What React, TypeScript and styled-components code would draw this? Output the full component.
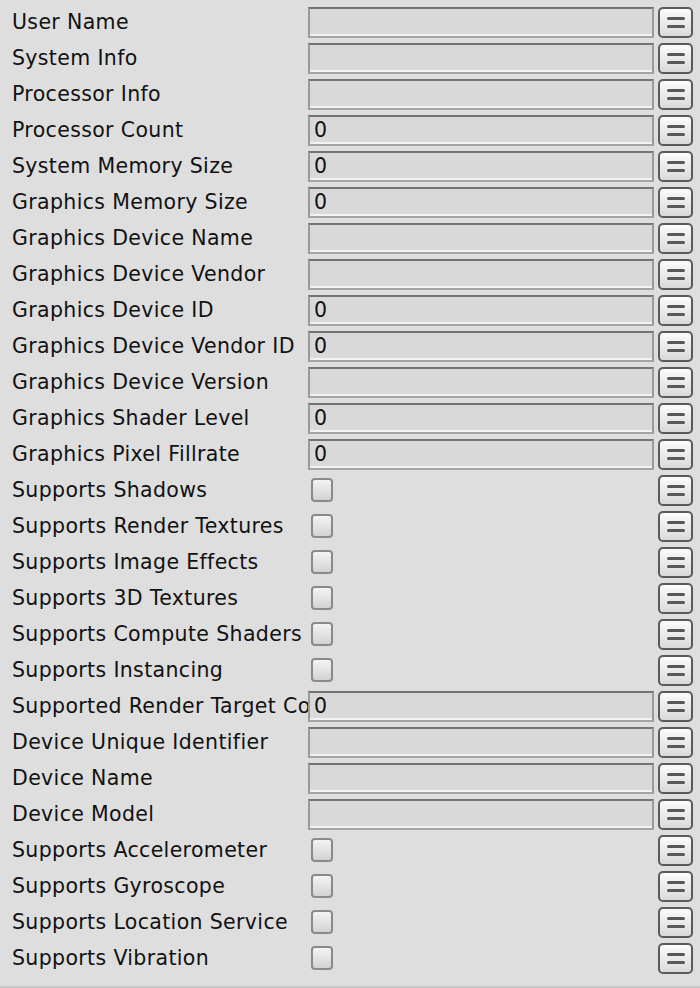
import styled, { createGlobalStyle } from "styled-components";

const GlobalStyle = createGlobalStyle`
  html, body {
    margin: 0;
    padding: 0;
    background: #dedede;
  }
`;

const Panel = styled.div`
  box-sizing: border-box;
  width: 700px;
  height: 988px;
  padding-top: 4px;
  background: #dedede;
  border-bottom: 2px solid #c8c8c8;
  font-family: "DejaVu Sans", Verdana, sans-serif;
  font-size: 20.5px;
  letter-spacing: 0.35px;
  color: #111;
  display: flex;
  flex-direction: column;
`;

const Row = styled.div`
  display: grid;
  grid-template-columns: 296px 346px 35px;
  align-items: center;
  height: 36px;
  padding-left: 12px;
`;

const Label = styled.div`
  white-space: nowrap;
  overflow: hidden;
  line-height: 36px;
`;

const Field = styled.div`
  box-sizing: border-box;
  height: 31px;
  background: #d9d9d9;
  border-top: 2px solid #727272;
  border-left: 2px solid #9a9a9a;
  border-right: 2px solid #9a9a9a;
  border-bottom: 2px solid #a4a4a4;
  box-shadow: inset 0 -2px 0 #f2f2f2;
  padding-left: 4px;
  line-height: 27px;
  color: #111;
`;

const CheckCell = styled.div`
  display: flex;
  align-items: center;
  padding-left: 3px;
`;

const Check = styled.div`
  box-sizing: border-box;
  width: 22px;
  height: 24px;
  border: 2px solid #8a8a8a;
  border-radius: 4px;
  background: linear-gradient(#f4f4f4, #d2d2d2);
`;

const MenuButton = styled.div`
  box-sizing: border-box;
  width: 35px;
  height: 31px;
  margin-left: 4px;
  border: 2px solid #5a5a5a;
  border-radius: 5px;
  background: linear-gradient(#fbfbfb, #dadada);
  display: flex;
  flex-direction: column;
  align-items: center;
  justify-content: center;
  gap: 5px;
`;

const Bar = styled.span`
  display: block;
  width: 18px;
  height: 3px;
  border-radius: 2px;
  background: #585858;
`;

type Item = { label: string; kind: "text" | "number" | "check" };

const items: Item[] = [
  { label: "User Name", kind: "text" },
  { label: "System Info", kind: "text" },
  { label: "Processor Info", kind: "text" },
  { label: "Processor Count", kind: "number" },
  { label: "System Memory Size", kind: "number" },
  { label: "Graphics Memory Size", kind: "number" },
  { label: "Graphics Device Name", kind: "text" },
  { label: "Graphics Device Vendor", kind: "text" },
  { label: "Graphics Device ID", kind: "number" },
  { label: "Graphics Device Vendor ID", kind: "number" },
  { label: "Graphics Device Version", kind: "text" },
  { label: "Graphics Shader Level", kind: "number" },
  { label: "Graphics Pixel Fillrate", kind: "number" },
  { label: "Supports Shadows", kind: "check" },
  { label: "Supports Render Textures", kind: "check" },
  { label: "Supports Image Effects", kind: "check" },
  { label: "Supports 3D Textures", kind: "check" },
  { label: "Supports Compute Shaders", kind: "check" },
  { label: "Supports Instancing", kind: "check" },
  { label: "Supported Render Target Count", kind: "number" },
  { label: "Device Unique Identifier", kind: "text" },
  { label: "Device Name", kind: "text" },
  { label: "Device Model", kind: "text" },
  { label: "Supports Accelerometer", kind: "check" },
  { label: "Supports Gyroscope", kind: "check" },
  { label: "Supports Location Service", kind: "check" },
  { label: "Supports Vibration", kind: "check" },
];

function App() {
  return (
    <>
      <GlobalStyle />
      <Panel>
        {items.map((item) => (
          <Row key={item.label}>
            <Label>{item.label}</Label>
            {item.kind === "check" ? (
              <CheckCell>
                <Check />
              </CheckCell>
            ) : (
              <Field>{item.kind === "number" ? "0" : ""}</Field>
            )}
            <MenuButton>
              <Bar />
              <Bar />
            </MenuButton>
          </Row>
        ))}
      </Panel>
    </>
  );
}

export default App;
